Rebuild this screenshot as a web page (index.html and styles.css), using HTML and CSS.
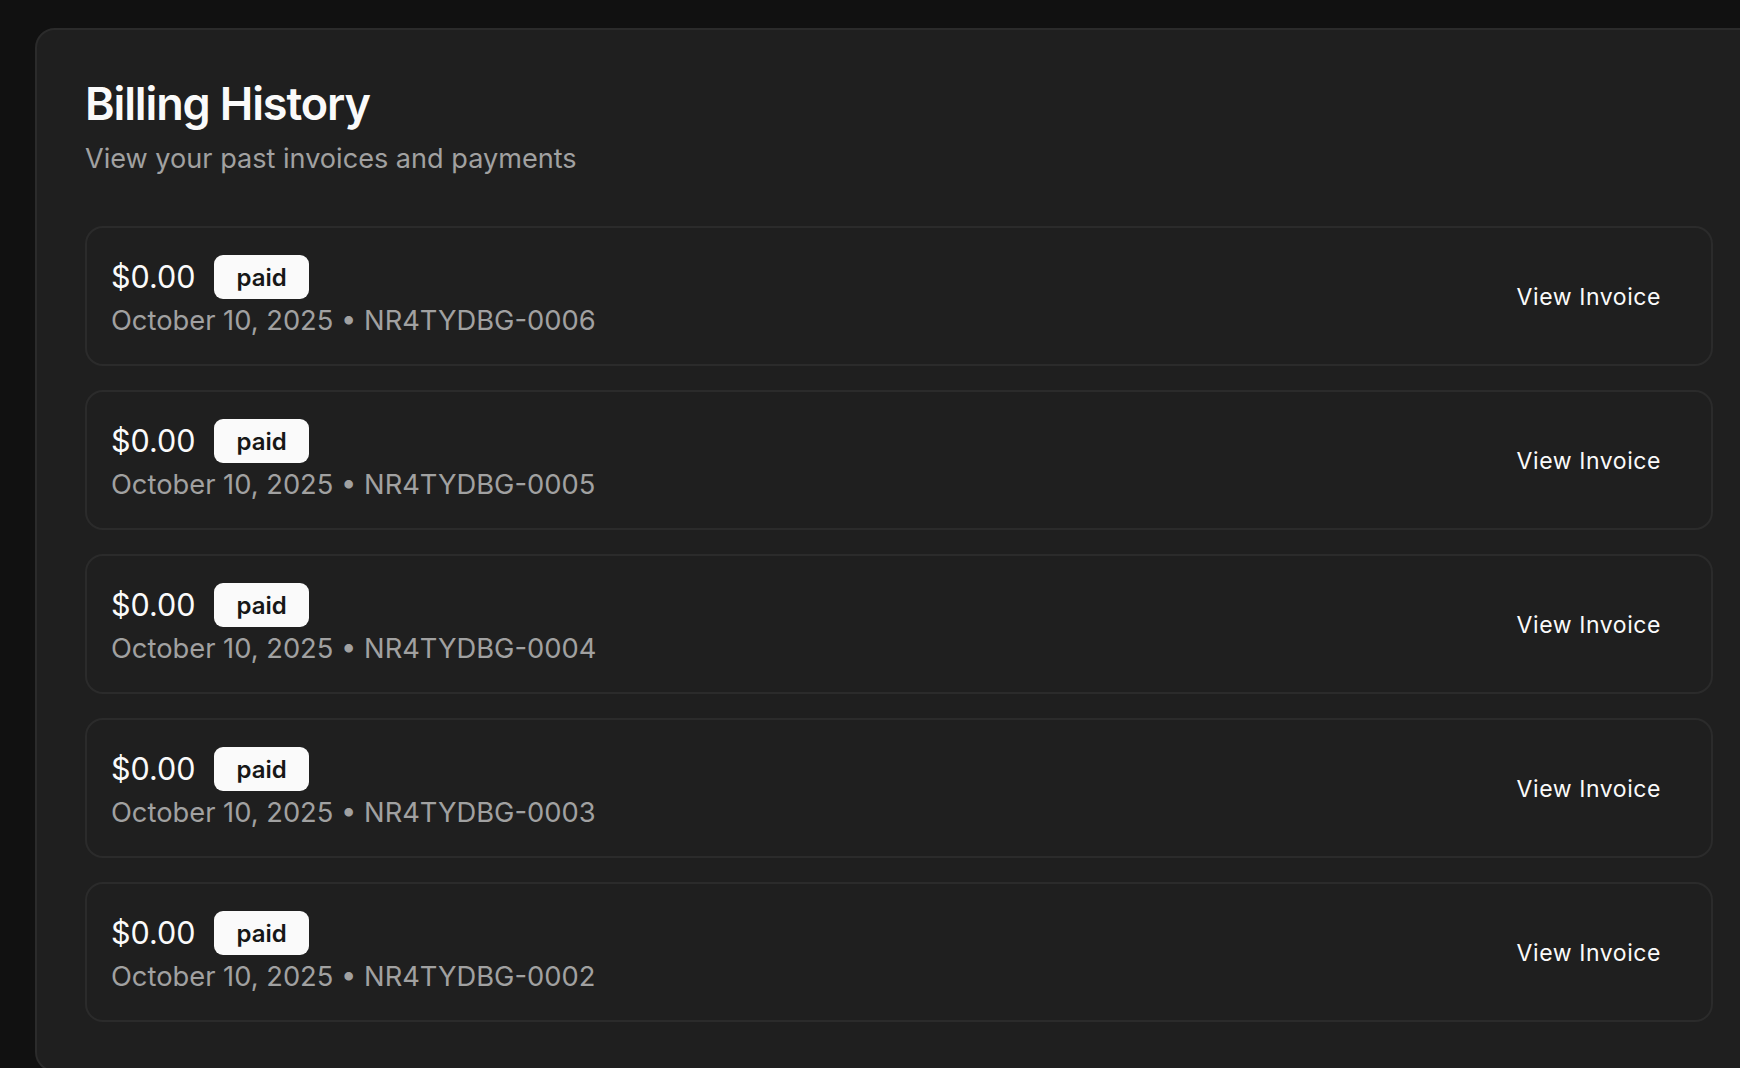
FILE: index.html
```html
<!DOCTYPE html>
<html lang="en">
<head>
<meta charset="utf-8">
<title>Billing History</title>
<link rel="stylesheet" href="styles.css">
</head>
<body>
<main class="page">
  <section class="card">
    <header class="card-header">
      <h1 class="title">Billing History</h1>
      <p class="subtitle">View your past invoices and payments</p>
    </header>
    <div class="list">
      <div class="row">
        <div class="info">
          <div class="line-top"><span class="amount">$0.00</span><span class="badge">paid</span></div>
          <div class="meta">October 10, 2025 • NR4TYDBG-0006</div>
        </div>
        <button class="link-btn">View Invoice</button>
      </div>
      <div class="row">
        <div class="info">
          <div class="line-top"><span class="amount">$0.00</span><span class="badge">paid</span></div>
          <div class="meta">October 10, 2025 • NR4TYDBG-0005</div>
        </div>
        <button class="link-btn">View Invoice</button>
      </div>
      <div class="row">
        <div class="info">
          <div class="line-top"><span class="amount">$0.00</span><span class="badge">paid</span></div>
          <div class="meta">October 10, 2025 • NR4TYDBG-0004</div>
        </div>
        <button class="link-btn">View Invoice</button>
      </div>
      <div class="row">
        <div class="info">
          <div class="line-top"><span class="amount">$0.00</span><span class="badge">paid</span></div>
          <div class="meta">October 10, 2025 • NR4TYDBG-0003</div>
        </div>
        <button class="link-btn">View Invoice</button>
      </div>
      <div class="row">
        <div class="info">
          <div class="line-top"><span class="amount">$0.00</span><span class="badge">paid</span></div>
          <div class="meta">October 10, 2025 • NR4TYDBG-0002</div>
        </div>
        <button class="link-btn">View Invoice</button>
      </div>
    </div>
  </section>
</main>
</body>
</html>
```

FILE: styles.css
```css
* { box-sizing: border-box; }
html, body {
  margin: 0;
  padding: 0;
  background: #111111;
  overflow: hidden;
  height: 100%;
}
body {
  font-family: Inter, "Noto Sans", "Liberation Sans", sans-serif;
  color: #fafafa;
}
.page {
  padding: 28px 0 0 35px;
}
.card {
  width: 1728px;
  background: #1f1f1f;
  border: 2px solid #2b2b2b;
  border-radius: 20px;
  padding: 48px;
}
.card-header {
  margin-bottom: 46px;
}
.title {
  margin: 0;
  font-size: 45px;
  line-height: 52px;
  font-weight: 600;
  letter-spacing: -0.025em;
  color: #fafafa;
}
.subtitle {
  margin: 8px 0 0;
  font-size: 27.1px;
  line-height: 42px;
  font-weight: 400;
  color: #a1a1a1;
}
.list {
  display: flex;
  flex-direction: column;
  gap: 24px;
}
.row {
  display: flex;
  align-items: center;
  justify-content: space-between;
  border: 2px solid #2b2b2b;
  border-radius: 18px;
  padding: 26px 26px 22px 24px;
  height: 140px;
}
.info {
  display: flex;
  flex-direction: column;
}
.line-top {
  display: flex;
  align-items: center;
  gap: 18px;
  height: 46px;
}
.amount {
  font-size: 30.5px;
  line-height: 42px;
  font-weight: 400;
  color: #fafafa;
}
.badge {
  display: inline-flex;
  align-items: center;
  height: 44px;
  padding: 0 22px 0 23px;
  border-radius: 9px;
  background: #fafafa;
  color: #171717;
  font-size: 24px;
  font-weight: 600;
}
.meta {
  font-size: 27.3px;
  line-height: 42px;
  color: #a1a1a1;
}
.link-btn {
  background: transparent;
  border: 0;
  padding: 0 24px;
  margin-top: -2px;
  height: 54px;
  font-family: inherit;
  font-size: 23px;
  font-weight: 400;
  letter-spacing: 0.025em;
  color: #fafafa;
  cursor: pointer;
}
```
